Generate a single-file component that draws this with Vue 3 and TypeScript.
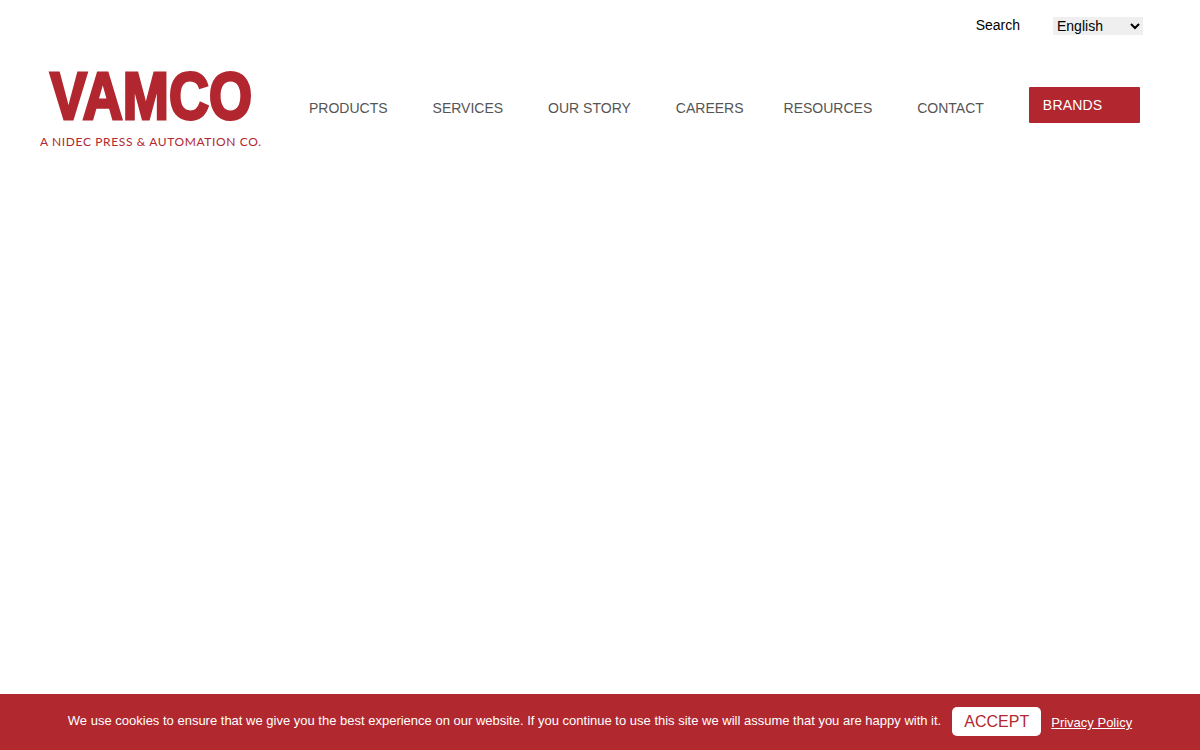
<template>
  <div class="page">
    <header class="site-header">
      <div class="top-bar">
        <a class="search-link" href="#">Search</a>
        <select class="lang-select" aria-label="Language">
          <option>English</option>
          <option>Deutsch</option>
        </select>
      </div>

      <div class="main-bar">
        <a class="logo" href="#" aria-label="Vamco">
          <svg width="221" height="84" viewBox="0 0 221 84">
            <text
              class="logo-name"
              x="10"
              y="54.5"
              textLength="202"
              lengthAdjust="spacingAndGlyphs"
            >VAMCO</text>
            <text
              class="logo-tag"
              x="0"
              y="82"
              textLength="221"
              lengthAdjust="spacing"
            >A NIDEC PRESS &amp; AUTOMATION CO.</text>
          </svg>
        </a>

        <nav class="main-nav">
          <a
            v-for="item in navItems"
            :key="item"
            class="nav-link"
            :class="{ tight: item === 'CAREERS' }"
            href="#"
          >{{ item }}</a>
          <a class="brands-btn" href="#">BRANDS</a>
        </nav>
      </div>
    </header>

    <!-- Cookie notice -->
    <div class="cookie-bar">
      <span class="cookie-text">We use cookies to ensure that we give you the best experience on our website. If you continue to use this site we will assume that you are happy with it.</span>
      <button class="accept-btn" type="button">ACCEPT</button>
      <a class="privacy-link" href="#">Privacy Policy</a>
    </div>
  </div>
</template>

<script setup lang="ts">
const navItems: string[] = ['PRODUCTS', 'SERVICES', 'OUR STORY', 'CAREERS', 'RESOURCES', 'CONTACT']
</script>

<style>
html,
body {
  margin: 0;
  background: #fff;
}
</style>

<style scoped>
.page {
  min-height: 750px;
  font-family: "Liberation Sans", Arial, sans-serif;
}

.site-header {
  padding: 17px 57px 0 40px;
}

.top-bar {
  display: flex;
  justify-content: flex-end;
  align-items: center;
  height: 18px;
}

.search-link {
  position: relative;
  top: -1px;
  font-size: 14px;
  color: #000;
  text-decoration: none;
  margin-right: 33px;
}

.lang-select {
  width: 90px;
  height: 18px;
  border: none;
  padding: 0;
  font-family: "Liberation Sans", Arial, sans-serif;
  font-size: 14px;
  color: #000;
  background-color: #efefef;
}

.main-bar {
  display: flex;
  align-items: flex-start;
  margin-top: 29px;
}

.logo {
  display: block;
  height: 84px;
}

.logo svg {
  display: block;
  overflow: visible;
}

.logo-name {
  font-family: "Liberation Sans", Arial, sans-serif;
  font-size: 66px;
  font-weight: 700;
  fill: #b2272f;
  stroke: #b2272f;
  stroke-width: 3px;
}

.logo-tag {
  font-family: Lato, "Liberation Sans", sans-serif;
  font-size: 12px;
  fill: #b2272f;
}

.main-nav {
  display: flex;
  align-items: flex-start;
  margin-left: 48px;
  margin-top: 23px;
}

.nav-link {
  font-size: 14px;
  line-height: 36px;
  margin-top: 3px;
  margin-right: 45px;
  color: #555;
  text-decoration: none;
  white-space: nowrap;
}

.nav-link.tight {
  margin-right: 40px;
}

.brands-btn {
  box-sizing: border-box;
  width: 111px;
  height: 36px;
  padding-left: 14px;
  border-radius: 1px;
  background: #b2272f;
  color: #fff;
  font-size: 14px;
  letter-spacing: 0.2px;
  line-height: 36px;
  text-decoration: none;
}

.cookie-bar {
  position: fixed;
  left: 0;
  right: 0;
  bottom: 0;
  height: 56px;
  display: flex;
  justify-content: center;
  align-items: center;
  background: #b1282f;
  color: #fff;
  font-size: 13px;
}

.cookie-text {
  position: relative;
  top: -2px;
  white-space: nowrap;
}

.accept-btn {
  width: 89px;
  height: 29px;
  margin: -1px 10px 0 11px;
  padding: 0;
  border: none;
  border-radius: 5px;
  background: #fff;
  color: #b1282f;
  font-family: "Liberation Sans", Arial, sans-serif;
  font-size: 16px;
}

.privacy-link {
  margin-top: 1px;
  color: #fff;
  text-decoration: underline;
}
</style>
